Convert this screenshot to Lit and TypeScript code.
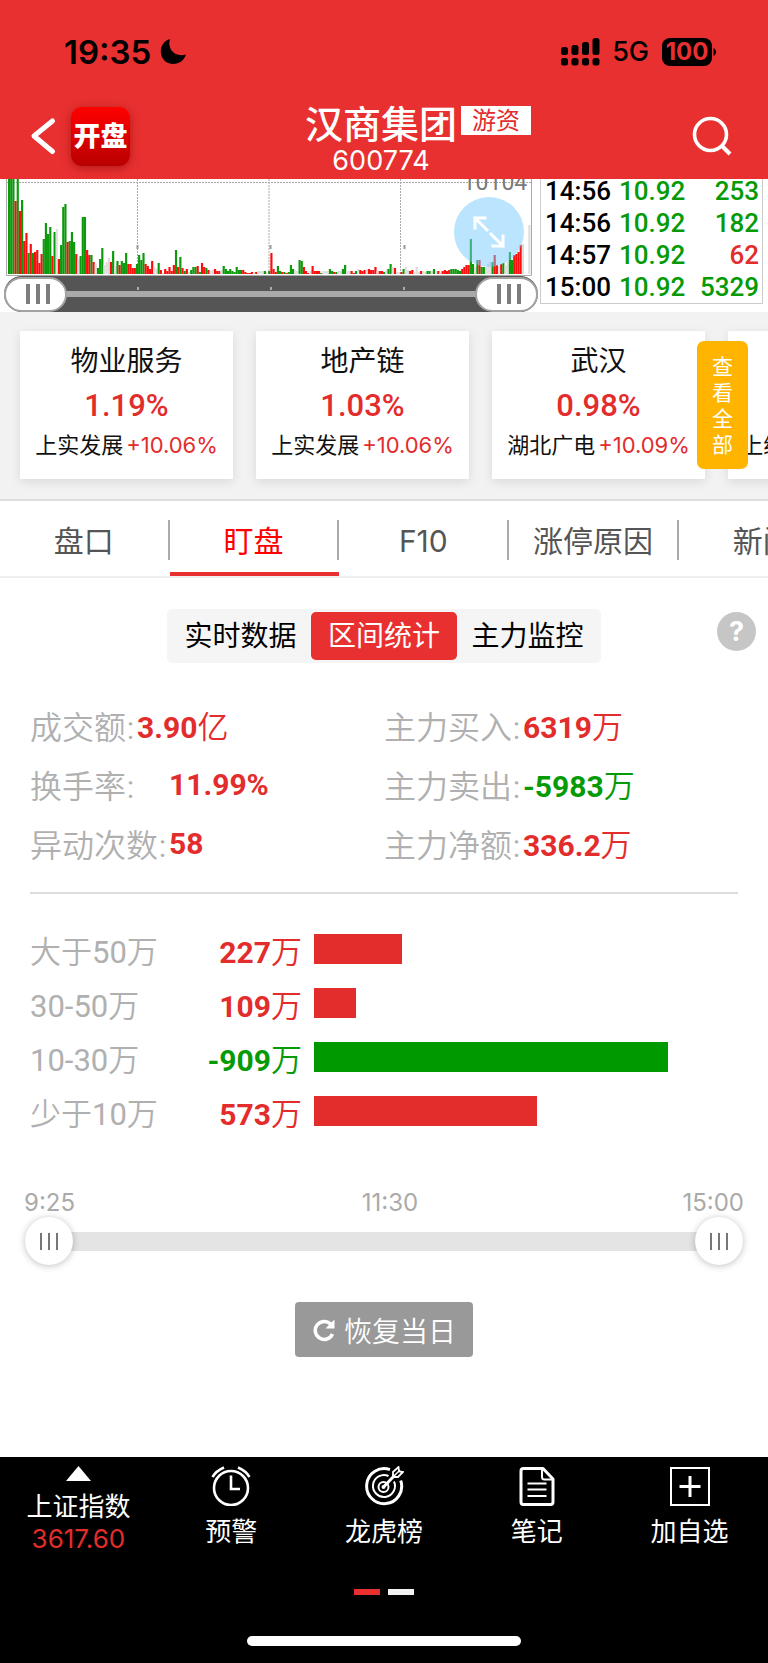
import { LitElement, html, svg, css } from "lit";
import { customElement, property, state } from "lit/decorators.js";
import { classMap } from "lit/directives/class-map.js";
import { styleMap } from "lit/directives/style-map.js";

type Tone = "up" | "down";

// One entry per minute: colour (r up, g down, y flat) followed by the bar height.
const VOLUMES =
  "g110 g110 g110 r73 g110 r63 g74 r33 r41 g21 r30 g21 r22 r24 r11 r20 g35 g51 g40 g47 r18 g42 y45 r15 g29 g67 g70 r32 g33 g42 g32 r20 y15 g18 g57 g57 r24 r19 g19 r12 " +
  "y10 g6 g15 g26 y9 y12 y16 r12 g23 y8 g13 r9 g13 g11 g21 r10 r10 r6 r6 g10 g19 g14 g21 r10 r8 r5 r13 y7 y5 g11 r4 y1 r5 r3 r7 r3 r9 g24 r7 g17 " +
  "r6 g3 r5 y2 g4 g7 g7 r8 g2 r11 r7 g6 r4 y3 y4 r5 r3 r3 y4 g8 g5 g3 g5 g3 g2 g7 g4 g4 r4 r2 r1 r1 r2 y2 r2 y3 y3 y3 g3 y2 " +
  "g3 r21 r5 r2 g8 g3 r2 g2 r1 g2 g9 g5 y4 y3 g14 g13 r7 r3 r1 y3 r8 r3 r3 r3 g1 y3 y3 y3 g5 g3 r2 g2 y3 y3 g5 g9 y3 y3 r3 r1 " +
  "g3 y5 r4 r3 r4 y5 r5 r4 r4 r7 y3 r3 r3 g2 y4 g5 g10 y7 r6 y2 y2 r2 g5 y7 y4 r3 r4 y2 y7 y2 r3 y3 y2 g3 g3 y3 g5 y3 r3 y2 " +
  "r3 r4 r3 r4 g5 g5 g5 g4 g3 r5 r7 r9 r9 g35 g10 y7 g14 r14 g7 g7 y7 y10 y12 g12 r19 r9 y8 r10 g11 y9 y12 g22 g14 r19 r20 r22 r29 y30 y0 y0 y49";

const FILLS: Record<string, string> = { r: "#fb0d0d", g: "#0c9a0c", y: "#dddddd" };

@customElement("volume-chart")
export class VolumeChart extends LitElement {
  static styles = css`
    :host { display: block; }
    .plot { position: relative; }
    .canvas { display: block; width: 100%; height: auto; }
    .peak {
      position: absolute; right: 2%; top: -10px; color: #7a7a7a;
      font: 400 23px/28px Roboto, "Liberation Sans", sans-serif;
    }
    .expand {
      position: absolute; right: 14px; top: 18px; width: 70px; height: 70px; padding: 0;
      border: 0; border-radius: 50%; background: rgba(119, 202, 255, 0.5);
      display: grid; place-items: center;
    }
    .range {
      display: grid; align-items: center; height: 36px; margin: 0 0 0 4px;
      background:
        linear-gradient(#aaa, #aaa) center / 100% 6px no-repeat,
        linear-gradient(#aaa, #aaa) 25% 11px / 2px 3px no-repeat,
        linear-gradient(#aaa, #aaa) 50% 11px / 2px 3px no-repeat,
        linear-gradient(#aaa, #aaa) 75% 11px / 2px 3px no-repeat,
        #555;
      border-radius: 18px;
    }
    .thumb {
      grid-area: 1 / 1; appearance: none; width: 100%; height: 36px; margin: 0;
      background: transparent; pointer-events: none;
    }
    .thumb::-webkit-slider-thumb {
      appearance: none; width: 63px; height: 35px; box-sizing: border-box; pointer-events: auto;
      border: 2px solid #a2a2a2; border-radius: 18px;
      background:
        linear-gradient(#7d7d7d, #7d7d7d) 20px center / 4px 20px no-repeat,
        linear-gradient(#7d7d7d, #7d7d7d) 30px center / 4px 20px no-repeat,
        linear-gradient(#7d7d7d, #7d7d7d) 40px center / 4px 20px no-repeat,
        #fff;
    }
  `;

  render() {
    const bars = VOLUMES.split(" ");
    return html`
      <div class="plot">
        <svg class="canvas" viewBox="0 0 538 97" role="img" aria-label="成交量">
          <path d="M6.5 0V96.5H531.5V0" fill="none" stroke="#aaa" />
          <path d="M7 3.500H531M137.500 0V96M269 0V96M400.500 0V96" fill="none" stroke="#aaa" stroke-dasharray="2 1" />
          <path d="M137.500 66v4M270.500 66v4M404.500 66v4" stroke="#999" stroke-width="2" />
          ${bars.map((b, i) => svg`<rect x=${8 + i * 2.168} y=${95 - Number(b.slice(1))} width="2.168" height=${Number(b.slice(1))} fill=${FILLS[b[0]]} />`)}
        </svg>
        <span class="peak">10104</span>
        <button class="expand" aria-label="全屏">
          <svg width="34" height="34" viewBox="0 0 34 34" fill="none" stroke="#fff" stroke-width="3" stroke-linecap="square">
            <path d="M13 3H3V13M3 3L15 15M21 31H31V21M31 31L19 19" />
          </svg>
        </button>
      </div>
      <div class="range">
        <input class="thumb" type="range" min="0" max="240" value="0" aria-label="开始时间" />
        <input class="thumb" type="range" min="0" max="240" value="240" aria-label="结束时间" />
      </div>
    `;
  }
}

@customElement("sector-card")
export class SectorCard extends LitElement {
  @property() name = "";
  @property() change = "";
  @property() leader = "";
  @property() gain = "";

  static styles = css`
    :host {
      display: flex; flex-direction: column; align-items: center; box-sizing: border-box;
      height: 148px; padding: 10px 0; background: #fff; color: #111;
      box-shadow: 0 3px 10px rgba(0, 0, 0, 0.1);
      font-family: Inter, "Noto Sans CJK SC", sans-serif; white-space: nowrap;
    }
    .name { font-size: 28px; line-height: 40px; }
    .change { font: 500 31px/50px Roboto, sans-serif; color: #e32c2c; }
    .lead { font-size: 22px; line-height: 28px; display: flex; gap: 3px; }
    .gain { color: #e32c2c; }
  `;

  render() {
    return html`
      <span class="name">${this.name}</span>
      <span class="change">${this.change}</span>
      <span class="lead"><span>${this.leader}</span><span class="gain">${this.gain}</span></span>
    `;
  }
}

@customElement("app-root")
export class AppRoot extends LitElement {
  @state() private tab = 1;
  @state() private mode = 1;

  private trades: [string, string, string, Tone][] = [
    ["14:56", "10.92", "253", "down"],
    ["14:56", "10.92", "182", "down"],
    ["14:57", "10.92", "62", "up"],
    ["15:00", "10.92", "5329", "down"],
  ];
  private sectors = [
    ["物业服务", "1.19%", "上实发展", "+10.06%"],
    ["地产链", "1.03%", "上实发展", "+10.06%"],
    ["武汉", "0.98%", "湖北广电", "+10.09%"],
    ["上海", "0.86%", "上纬新材", "+20.00%"],
  ];
  private stats: [string, string, string, Tone, boolean?][] = [
    ["成交额", "3.90", "亿", "up"],
    ["主力买入", "6319", "万", "up"],
    ["换手率", "11.99%", "", "up", true],
    ["主力卖出", "-5983", "万", "down"],
    ["异动次数", "58", "", "up"],
    ["主力净额", "336.2", "万", "up"],
  ];
  private flows: [string, number][] = [
    ["大于50万", 227],
    ["30-50万", 109],
    ["10-30万", -909],
    ["少于10万", 573],
  ];

  static styles = css`
    :host {
      display: flex; flex-direction: column; min-height: 100vh; overflow: hidden;
      background: #fff; color: #000;
      font-family: Inter, "Noto Sans CJK SC", sans-serif;
    }
    button { font-family: inherit; border: 0; padding: 0; margin: 0; background: none; color: inherit; }
    .up { color: #e32c2c; }
    .down { color: #069a06; }

    .top { background: #e93030; color: #fff; position: relative; z-index: 1; }
    .status { display: flex; align-items: center; justify-content: space-between; height: 97px; padding: 6px 51px 0 64px; box-sizing: border-box; color: #000; }
    .group { display: flex; align-items: center; }
    .time { font-size: 33px; font-weight: 600; line-height: 40px; margin-right: 9px; }
    .net { font-size: 27px; font-weight: 500; line-height: 40px; margin: 0 13px 0 12px; }
    .battery { background: #000; color: #e93030; border-radius: 8px; height: 28px; width: 50px; text-align: center; font-size: 24px; font-weight: 700; line-height: 28px; }
    .nav { display: grid; grid-template-columns: 1fr auto 1fr; align-items: center; height: 82px; padding: 0 36px 0 30px; }
    .back { width: 27px; height: 40px; }
    .logo {
      width: 59px; height: 59px; margin-left: 14px; border-radius: 11px; text-align: center;
      background: linear-gradient(#ff0000, #b80000); box-shadow: 0 2px 10px rgba(120, 0, 0, 0.5);
      font-size: 27px; font-weight: 900; line-height: 60px;
    }
    .left { display: flex; align-items: center; padding-bottom: 4px; }
    .title { display: grid; grid-template-columns: 1fr auto 1fr; justify-items: center; }
    .title h1 { grid-column: 2; margin: 0; font-size: 38px; font-weight: 500; line-height: 46px; }
    .tag { justify-self: start; align-self: start; margin: 5px 0 0 4px; padding: 0 11px; background: #fff; color: #e32c2c; font-size: 24px; line-height: 29px; }
    .code { grid-column: 1 / -1; font-size: 27px; line-height: 28px; }
    .search { justify-self: end; width: 40px; height: 40px; margin-bottom: 4px; }

    .market { display: grid; grid-template-columns: 538fr 230fr; height: 133px; }
    .tape { margin: 0 5px 10px 2px; border: 1px solid #ccc; border-top: 0; }
    .trades { width: 100%; border-collapse: collapse; font: 500 26px/32px Roboto, sans-serif; margin-top: -4px; }
    .trades td { padding: 0; text-align: left; }
    .trades .t { padding-left: 4px; }
    .trades .v { text-align: right; padding-right: 3px; }

    .sectors { position: relative; background: #f2f2f2; border-bottom: 2px solid #ddd; padding: 19px 20px 20px; overflow: hidden; }
    .cards { display: grid; grid-auto-flow: column; grid-auto-columns: 213px; gap: 23px; }
    .all {
      position: absolute; right: 20px; top: 29px; width: 51px; height: 128px; border-radius: 7px;
      background: #ffb400; color: #fff; padding: 2px 14px 0; font-size: 21px; line-height: 26px; word-break: break-all;
    }

    .tabs { display: grid; grid-auto-flow: column; grid-auto-columns: 22.1%; border-bottom: 2px solid #eee; overflow: hidden; height: 75px; }
    .tab { position: relative; font-size: 30px; line-height: 38px; color: #555; display: flex; flex-direction: column; align-items: center; }
    .tab span { width: 100%; box-sizing: border-box; margin-top: 19px; padding-top: 2px; border-right: 2px solid #aaa; white-space: nowrap; }
    .tab.on { color: #f00; }
    .tab.on::after { content: ""; width: 100%; height: 4px; margin-top: auto; background: #e93030; }

    .modes { display: grid; grid-template-columns: 1fr auto 1fr; align-items: center; padding: 31px 12px 0; }
    .seg { grid-column: 2; display: flex; padding: 3px; background: #f5f5f5; border-radius: 5px; }
    .seg button { width: 141px; height: 48px; font-size: 28px; line-height: 48px; border-radius: 5px; }
    .seg .on { width: 146px; background: #e93030; color: #fff; }
    .help { justify-self: end; width: 39px; height: 39px; margin-bottom: 10px; border-radius: 50%; background: #c6c6c6; color: #fff; font-size: 27px; font-weight: 700; line-height: 39px; }

    .stats { display: grid; grid-template-columns: 354fr 354fr; grid-auto-rows: 59px; margin: 32px 30px 0; padding-bottom: 20px; border-bottom: 2px solid #ddd; }
    .stat { display: flex; align-items: center; font-size: 32px; font-weight: 350; }
    dt { color: #b0b0b0; }
    dd { margin: 0 0 0 2px; font-size: 31px; }
    .wide dd { margin-left: 34px; }
    b { font-family: Roboto, sans-serif; font-weight: 700; font-size: 30px; }

    .flows { list-style: none; margin: 28px 30px 0; padding: 0; display: grid; grid-auto-rows: 54px; }
    .flow { display: grid; grid-template-columns: 150px 122px 1fr; align-items: center; font-size: 31px; font-weight: 350; }
    .band { color: #b0b0b0; }
    .band i { font: 400 31px Roboto, sans-serif; }
    .sum { text-align: right; }
    .track { margin-left: 12px; }
    .bar { height: 30px; background: #e32c2c; }
    .bar.down { background: #009900; }

    .window { margin: 50px 24px 0; }
    .ticks { display: grid; grid-template-columns: 1fr auto 1fr; font-size: 24px; line-height: 29px; color: #aaa; }
    .ticks .noon { padding-left: 12px; }
    .ticks .close { text-align: right; }
    .slider { display: grid; align-items: center; height: 48px; margin: 0 1px; background: linear-gradient(#e4e4e4, #e4e4e4) center / calc(100% - 50px) 19px no-repeat; }
    .knob { grid-area: 1 / 1; appearance: none; width: 100%; height: 48px; margin: 0; background: transparent; pointer-events: none; }
    .knob::-webkit-slider-thumb {
      appearance: none; width: 48px; height: 48px; border-radius: 50%; pointer-events: auto;
      box-shadow: 0 1px 7px rgba(0, 0, 0, 0.25);
      background:
        linear-gradient(#777, #777) 15px center / 2px 17px no-repeat,
        linear-gradient(#777, #777) 23px center / 2px 17px no-repeat,
        linear-gradient(#777, #777) 31px center / 2px 17px no-repeat,
        #fff;
    }
    .reset { align-self: center; display: flex; align-items: center; gap: 8px; margin: 37px 0 48px; height: 55px; padding: 0 17px; border-radius: 4px; background: #999; color: #fff; font-size: 28px; font-weight: 350; }

    .foot { margin-top: auto; background: #000; color: #fff; display: flex; flex-direction: column; align-items: center; padding-bottom: 17px; }
    .menu { align-self: stretch; display: grid; grid-template-columns: repeat(5, 1fr); padding: 9px 2px 0; height: 123px; }
    .item { display: flex; flex-direction: column; align-items: center; font-size: 26px; line-height: 33px; color: #fff; text-decoration: none; }
    .item svg { margin-bottom: 9px; }
    .item .tri { margin-bottom: 9px; }
    .quote { color: #e32c2c; line-height: 32px; }
    .pager { display: flex; gap: 8px; }
    .dot { width: 26px; height: 6px; background: #f2f2f2; }
    .dot.on { background: #e93030; }
    .home { width: 274px; height: 10px; border-radius: 5px; background: #fff; margin-top: 41px; }
  `;

  private header() {
    return html`
      <header class="top">
        <div class="status">
          <div class="group">
            <span class="time">19:35</span>
            <svg width="27" height="27" viewBox="0 0 27 27"><path d="M10 1C7 10 14 20 26 16.500C24 22.500 19 26 13.500 26C6 26 .8 20.500 .8 13.500C.8 7.500 4.500 2.500 10 1Z" /></svg>
          </div>
          <div class="group">
            <svg width="39" height="28" viewBox="0 0 39 28">
              <rect x="0" y="9" width="7" height="8" rx="2.500" /><rect x="10.500" y="7" width="7" height="10" rx="2.500" /><rect x="21" y="4" width="7" height="13" rx="2.500" /><rect x="31.500" y="0" width="7" height="17" rx="2.500" />
              <rect x="0" y="20" width="7" height="7.500" rx="2.500" /><rect x="10.500" y="20" width="7" height="7.500" rx="2.500" /><rect x="21" y="20" width="7" height="7.500" rx="2.500" /><rect x="31.500" y="20" width="7" height="7.500" rx="2.500" />
            </svg>
            <span class="net">5G</span>
            <span class="battery">100</span>
            <svg width="5" height="10" viewBox="0 0 5 10"><path d="M1.500 1C5 3 5 7 1.500 9Z" /></svg>
          </div>
        </div>
        <div class="nav">
          <div class="left">
            <button class="back" aria-label="返回">
              <svg width="27" height="40" viewBox="0 0 27 40" fill="none" stroke="#fff" stroke-width="5" stroke-linecap="round" stroke-linejoin="round"><path d="M22.500 5L4 20L22.500 35.500" /></svg>
            </button>
            <span class="logo">开盘</span>
          </div>
          <div class="title">
            <h1>汉商集团</h1><span class="tag">游资</span>
            <span class="code">600774</span>
          </div>
          <button class="search" aria-label="搜索">
            <svg width="40" height="40" viewBox="0 0 40 40" fill="none" stroke="#fff" stroke-width="3.600"><circle cx="18.500" cy="18.500" r="16" /><path d="M30 30L38 38" stroke-width="4" /></svg>
          </button>
        </div>
      </header>
    `;
  }

  private footer() {
    return html`
      <footer class="foot">
        <nav class="menu">
          <a class="item" href="#index">
            <svg class="tri" width="25" height="15" viewBox="0 0 25 15"><path d="M12.500 0L25 15H0Z" fill="#fff" /></svg>
            <span>上证指数</span><span class="quote">3617.60</span>
          </a>
          <a class="item" href="#alert">
            <svg width="40" height="40" viewBox="0 0 40 40" fill="none" stroke="#fff" stroke-width="2.600">
              <circle cx="20" cy="22" r="17" /><path d="M20 9.500V23H29" /><path d="M1.500 11Q5 5 13 1.500M38.500 11Q35 5 27 1.500" />
            </svg>
            <span>预警</span>
          </a>
          <a class="item" href="#rank">
            <svg width="40" height="40" viewBox="0 0 40 40" fill="none" stroke="#fff" stroke-width="2">
              <path d="M26 3.700A17.500 17.500 0 1 0 36.700 14.500" stroke-width="3" />
              <path d="M24.500 10A11 11 0 1 0 30 15.500" /><circle cx="19.500" cy="21" r="5" /><circle cx="19.500" cy="21" r="1" />
              <path d="M20 20.500L31 9" stroke-width="3" /><path d="M29 10V6L34.500 1L35 5.500L39 6L34 11H30" stroke-width="1.800" /><path d="M31 9L36 4" stroke-width="1.500" />
            </svg>
            <span>龙虎榜</span>
          </a>
          <a class="item" href="#notes">
            <svg width="40" height="40" viewBox="0 0 40 40" fill="none" stroke="#fff" stroke-width="3" stroke-linejoin="round">
              <path d="M4 5Q4 2.500 6.500 2.500H26L36 13V36Q36 38.500 33.500 38.500H6.500Q4 38.500 4 36Z" /><path d="M25 3V11Q25 13.500 27.500 13.500H36" stroke-width="2" /><path d="M10.500 17.500H29.500M10.500 23.500H29.500M10.500 30H29.500" stroke-width="2" />
            </svg>
            <span>笔记</span>
          </a>
          <a class="item" href="#add">
            <svg width="40" height="40" viewBox="0 0 40 40" fill="none" stroke="#fff"><rect x="1" y="2" width="38" height="37" stroke-width="2" /><path d="M9.500 20.500H30.500M20 10V31" stroke-width="3" /></svg>
            <span>加自选</span>
          </a>
        </nav>
        <div class="pager"><span class="dot on"></span><span class="dot"></span></div>
        <div class="home"></div>
      </footer>
    `;
  }

  render() {
    const peak = Math.max(...this.flows.map(([, v]) => Math.abs(v)));
    return html`
      ${this.header()}
      <section class="market">
        <volume-chart></volume-chart>
        <div class="tape">
          <table class="trades">
            <tbody>
              ${this.trades.map(([t, p, v, tone]) => html`<tr><td class="t">${t}</td><td class="down">${p}</td><td class="v ${tone}">${v}</td></tr>`)}
            </tbody>
          </table>
        </div>
      </section>

      <section class="sectors">
        <div class="cards">
          ${this.sectors.map(([n, c, l, g]) => html`<sector-card .name=${n} .change=${c} .leader=${l} .gain=${g}></sector-card>`)}
        </div>
        <button class="all">查看全部</button>
      </section>

      <nav class="tabs">
        ${["盘口", "盯盘", "F10", "涨停原因", "新闻"].map(
          (t, i) => html`<button class=${classMap({ tab: true, on: i === this.tab })} @click=${() => (this.tab = i)}><span>${t}</span></button>`
        )}
      </nav>

      <div class="modes">
        <div class="seg">
          ${["实时数据", "区间统计", "主力监控"].map(
            (t, i) => html`<button class=${classMap({ on: i === this.mode })} @click=${() => (this.mode = i)}>${t}</button>`
          )}
        </div>
        <button class="help" aria-label="帮助">?</button>
      </div>

      <dl class="stats">
        ${this.stats.map(
          ([k, v, u, tone, wide]) => html`<div class=${classMap({ stat: true, wide: !!wide })}><dt>${k}:</dt><dd class=${tone}><b>${v}</b>${u}</dd></div>`
        )}
      </dl>

      <ul class="flows">
        ${this.flows.map(([k, v]) => {
          const tone = v < 0 ? "down" : "up";
          return html`<li class="flow">
            <span class="band">${k.split(/([\d-]+)/).map((s) => (/\d/.test(s) ? html`<i>${s}</i>` : s))}</span>
            <span class="sum ${tone}"><b>${v}</b>万</span>
            <div class="track"><div class="bar ${tone}" style=${styleMap({ width: `${(Math.abs(v) / peak) * 83.5}%` })}></div></div>
          </li>`;
        })}
      </ul>

      <div class="window">
        <div class="ticks"><span>9:25</span><span class="noon">11:30</span><span class="close">15:00</span></div>
        <div class="slider">
          <input class="knob" type="range" min="0" max="240" value="0" aria-label="区间开始" />
          <input class="knob" type="range" min="0" max="240" value="240" aria-label="区间结束" />
        </div>
      </div>
      <button class="reset">
        <svg width="24" height="24" viewBox="0 0 24 24" fill="none" stroke="#fff" stroke-width="3.500"><path d="M20.500 16A9 9 0 1 1 19 6.500" /><path d="M22.500 1.500V10.500H13.500Z" fill="#fff" stroke="none" /></svg>
        恢复当日
      </button>
      ${this.footer()}
    `;
  }
}
